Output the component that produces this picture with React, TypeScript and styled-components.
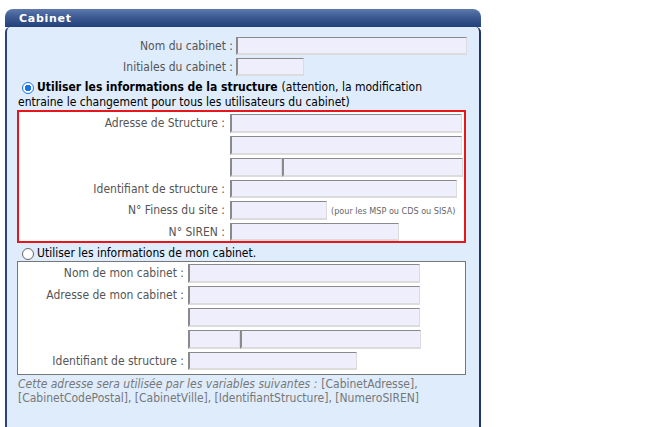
import React from "react";
import styled, { createGlobalStyle } from "styled-components";

const Global = createGlobalStyle`
  html, body { margin: 0; padding: 0; background: #fff; }
  body { font-family: "DejaVu Sans Condensed", "DejaVu Sans", sans-serif; font-size: 12px; color: #555; }
`;

const Page = styled.div`
  padding: 9px 0 0 5px;
  width: 476px;
`;

const Panel = styled.div`
  display: flex;
  flex-direction: column;
  height: 418px;
`;

const Header = styled.div`
  height: 18px;
  border-radius: 8px 8px 0 0;
  background: linear-gradient(#5d79ad 0%, #3d5a92 45%, #22407a 100%);
  color: #fff;
  font-family: "DejaVu Sans", sans-serif;
  font-weight: bold;
  font-size: 11px;
  letter-spacing: 0.7px;
  padding-left: 14px;
  line-height: 20px;
  box-sizing: border-box;
`;

const Body = styled.div`
  flex: 1;
  background: #deecfc;
  border-left: 2px solid #2b4578;
  border-right: 2px solid #1f3566;
  border-radius: 5px 5px 0 0;
  padding: 10px 12px 0 10px;
  box-sizing: border-box;
`;

const FormGrid = styled.div<{ $label: number; $gap: number }>`
  display: grid;
  grid-template-columns: ${(p) => p.$label}px auto;
  column-gap: ${(p) => p.$gap}px;
  row-gap: 3px;
  align-items: center;
`;

const Label = styled.div`
  text-align: right;
  white-space: nowrap;
  color: #555;
  line-height: 17px;
`;

const Field = styled.div`
  display: flex;
  align-items: center;
  gap: 4px;
`;

const Input = styled.div<{ $w: number; $h?: number }>`
  width: ${(p) => p.$w}px;
  height: ${(p) => p.$h ?? 19}px;
  box-sizing: border-box;
  background: #eeeefd;
  border-style: solid;
  border-width: 1px 1px 2px 2px;
  border-color: #8a8a8a #dcdcdc #dcdcdc #8a8a8a;
  flex-shrink: 0;
`;

const Split = styled.div`
  display: flex;
`;

const Note = styled.span`
  font-size: 9px;
  color: #666;
  white-space: nowrap;
`;

const Option = styled.div<{ $mt: number }>`
  margin-top: ${(p) => p.$mt}px;
  padding-left: 1px;
  color: #000;
  line-height: 15px;
`;

const OptionRow = styled.div`
  display: flex;
  align-items: center;
  white-space: nowrap;
`;

const Radio = styled.span<{ $on?: boolean }>`
  display: inline-block;
  flex-shrink: 0;
  width: 12px;
  height: 12px;
  border-radius: 50%;
  box-sizing: border-box;
  border: 1px solid ${(p) => (p.$on ? "#1a73e8" : "#666")};
  background: ${(p) =>
    p.$on ? "radial-gradient(circle, #1a73e8 0 3px, #fff 3.5px)" : "#fff"};
  margin: 0 3px 0 4px;
`;

const Strong = styled.b`
  color: #000;
  margin-right: 4px;
`;

const Box = styled.div<{ $border: string; $pad: string }>`
  background: #fff;
  border: ${(p) => p.$border};
  padding: ${(p) => p.$pad};
  width: 449px;
  box-sizing: border-box;
`;

const Hint = styled.div`
  margin-top: 2px;
  color: #777;
  line-height: 14px;
  padding-left: 1px;
`;

const HintLine = styled.div`
  white-space: nowrap;
`;

const Em = styled.i`
  margin-right: 4px;
`;

export default function App() {
  return (
    <>
      <Global />
      <Page>
        <Panel>
          <Header>Cabinet</Header>
          <Body>
            <FormGrid $label={216} $gap={3}>
              <Label>Nom du cabinet :</Label>
              <Input $w={231} $h={18} />
              <Label>Initiales du cabinet :</Label>
              <Input $w={68} $h={18} />
            </FormGrid>
            <Option $mt={4}>
              <OptionRow>
                <Radio $on />
                <Strong>Utiliser les informations de la structure</Strong>
                <span>(attention, la modification</span>
              </OptionRow>
              <div>entraine le changement pour tous les utilisateurs du cabinet)</div>
            </Option>
            <Box $border="2px solid #e8151b" $pad="2px 0 0 0">
              <FormGrid $label={206} $gap={5}>
                <Label>Adresse de Structure :</Label>
                <Input $w={232} />
                <span />
                <Input $w={232} />
                <span />
                <Split>
                  <Input $w={52} />
                  <Input $w={181} />
                </Split>
                <Label>Identifiant de structure :</Label>
                <Input $w={227} $h={18} />
                <Label>N° Finess du site :</Label>
                <Field>
                  <Input $w={97} />
                  <Note>(pour les MSP ou CDS ou SISA)</Note>
                </Field>
                <Label>N° SIREN :</Label>
                <Input $w={169} $h={18} />
              </FormGrid>
            </Box>
            <Option $mt={3}>
              <OptionRow>
                <Radio />
                <span>Utiliser les informations de mon cabinet.</span>
              </OptionRow>
            </Option>
            <Box $border="1px solid #777" $pad="2px 0 4px 0">
              <FormGrid $label={166} $gap={4}>
                <Label>Nom de mon cabinet :</Label>
                <Input $w={232} />
                <Label>Adresse de mon cabinet :</Label>
                <Input $w={232} />
                <span />
                <Input $w={232} />
                <span />
                <Split>
                  <Input $w={52} />
                  <Input $w={181} />
                </Split>
                <Label>Identifiant de structure :</Label>
                <Input $w={169} $h={18} />
              </FormGrid>
            </Box>
            <Hint>
              <HintLine>
                <Em>Cette adresse sera utilisée par les variables suivantes :</Em>[CabinetAdresse],
              </HintLine>
              <HintLine>[CabinetCodePostal], [CabinetVille], [IdentifiantStructure], [NumeroSIREN]</HintLine>
            </Hint>
          </Body>
        </Panel>
      </Page>
    </>
  );
}
